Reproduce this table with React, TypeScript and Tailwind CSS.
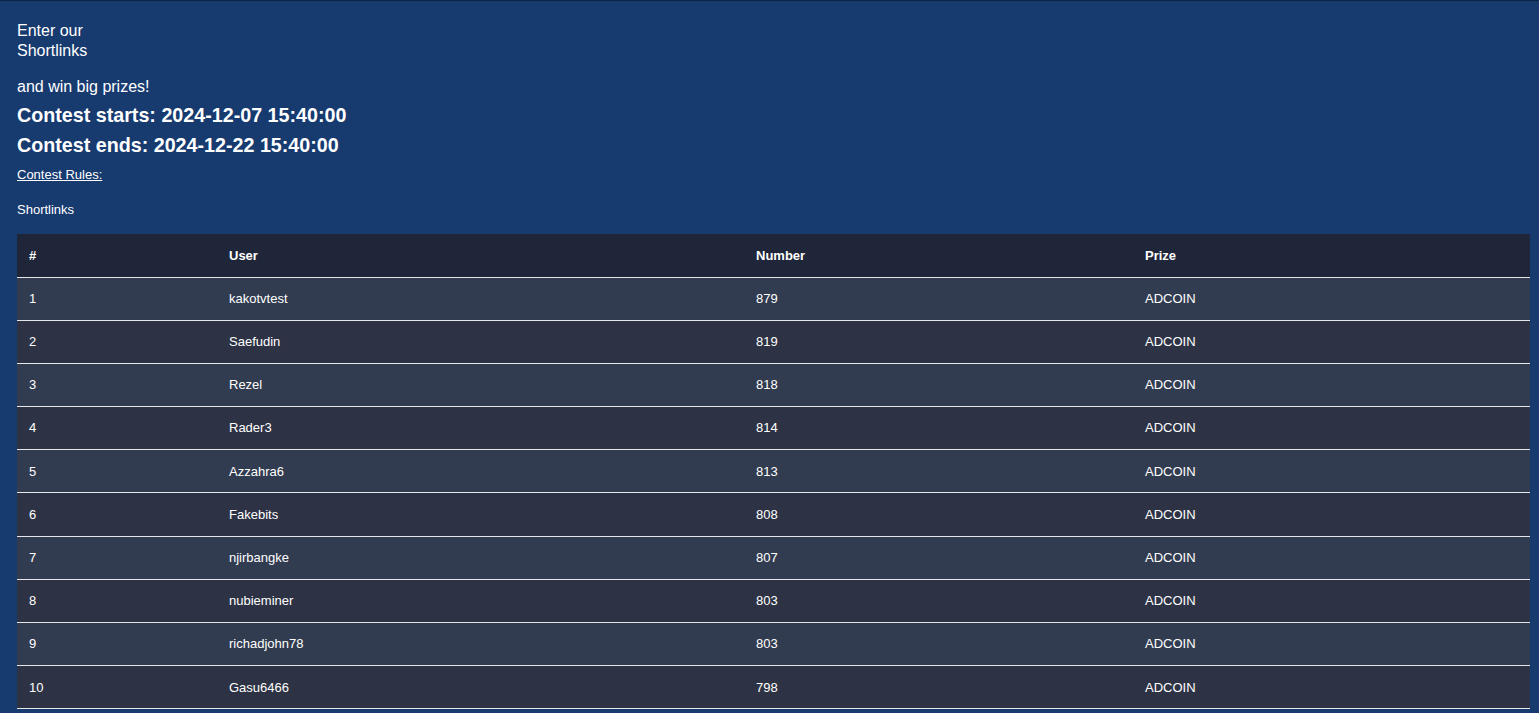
import React from 'react';

const rows = [
  { user: 'kakotvtest', number: 879 },
  { user: 'Saefudin', number: 819 },
  { user: 'Rezel', number: 818 },
  { user: 'Rader3', number: 814 },
  { user: 'Azzahra6', number: 813 },
  { user: 'Fakebits', number: 808 },
  { user: 'njirbangke', number: 807 },
  { user: 'nubieminer', number: 803 },
  { user: 'richadjohn78', number: 803 },
  { user: 'Gasu6466', number: 798 },
];

const App = () => {
  return (
    <div className="min-h-screen bg-[#173a6f] border-t border-[#0d2347] text-white font-['Liberation_Sans',Arial,sans-serif] px-[17px] pt-[20px] pb-4">
      <p className="text-[16px] leading-[20px]">
        Enter our
        <br />
        Shortlinks
      </p>
      <p className="text-[16px] leading-[20px] mt-[16px]">and win big prizes!</p>
      <h2 className="text-[19.7px] leading-[24px] font-bold mt-[6px]">Contest starts: 2024-12-07 15:40:00</h2>
      <h2 className="text-[19.7px] leading-[24px] font-bold mt-[6px]">Contest ends: 2024-12-22 15:40:00</h2>
      <a className="block text-[13px] leading-[16px] underline mt-[10px]">Contest Rules:</a>
      <p className="text-[13px] leading-[16px] mt-[19px]">Shortlinks</p>
      <table className="w-[1513px] table-fixed border-collapse mt-[16px] text-[13px]">
        <thead>
          <tr className="bg-[#20263a] h-[43px] border-b border-[#e5e7eb]">
            <th className="w-[200px] text-left font-bold pl-3">#</th>
            <th className="w-[527px] text-left font-bold pl-3">User</th>
            <th className="w-[389px] text-left font-bold pl-3">Number</th>
            <th className="text-left font-bold pl-3">Prize</th>
          </tr>
        </thead>
        <tbody>
          {rows.map((r, i) => (
            <tr
              key={i}
              className={`h-[43.2px] border-b border-[#e5e7eb] ${i % 2 === 0 ? 'bg-[#323c50]' : 'bg-[#2d3345]'}`}
            >
              <td className="pl-3">{i + 1}</td>
              <td className="pl-3">{r.user}</td>
              <td className="pl-3">{r.number}</td>
              <td className="pl-3">ADCOIN</td>
            </tr>
          ))}
        </tbody>
      </table>
    </div>
  );
};

export default App;
